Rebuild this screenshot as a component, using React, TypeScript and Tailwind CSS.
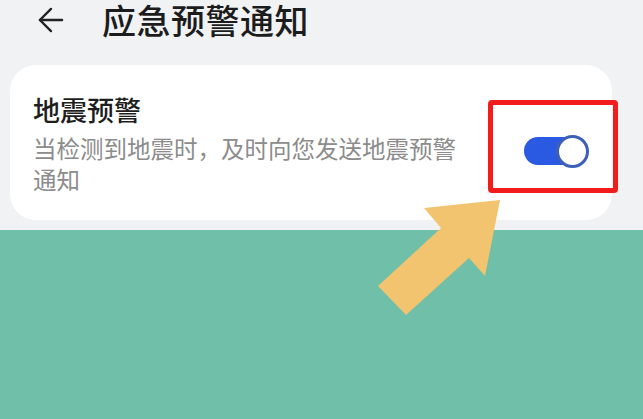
import { ArrowLeft } from 'lucide-react';

function Toggle() {
  return (
    <div className="relative w-[64px] h-[28px] rounded-full bg-[#2a5ae2] flex items-center justify-end">
      <div className="w-[33px] h-[33px] rounded-full bg-white border-[3px] border-[#3d5fb8] -mr-[1px]" />
    </div>
  );
}

export default function App() {
  return (
    <div
      className="relative w-[643px] h-[419px] overflow-hidden flex flex-col"
      style={{ fontFamily: '"Noto Sans CJK SC", "Noto Sans", sans-serif' }}
    >
      <div className="bg-[#f1f2f4] h-[230px] flex flex-col px-[10px]">
        <div className="flex items-center h-[40px] pl-[22px] gap-[32px]">
          <ArrowLeft className="w-[38px] h-[38px] text-[#222]" strokeWidth={1.5} />
          <h1 className="text-[34px] leading-[40px] font-medium text-[#1c1c1c] tracking-[0.5px]">
            应急预警通知
          </h1>
        </div>

        <div className="mt-[25px] bg-white rounded-[26px] w-[602px] h-[155px] flex items-start pl-[23px] pr-[24px] pt-[28px]">
          <div className="flex-1">
            <div className="text-[27px] leading-[34px] font-medium text-[#1e1e1e]">地震预警</div>
            <div className="mt-[6px] text-[23.5px] leading-[31px] text-[#8c8c8c] w-[440px]">
              当检测到地震时，及时向您发送地震预警通知
            </div>
          </div>
          <div className="mt-[44px]">
            <Toggle />
          </div>
        </div>
      </div>
      <div className="flex-1 bg-[#70bfa8]" />

      <div className="absolute left-[488px] top-[100px] w-[130px] h-[93px] border-[5px] border-[#f21c1c] rounded-[4px]" />

      <svg className="absolute left-0 top-0" width="643" height="419" viewBox="0 0 643 419">
        <polygon
          points="500,200 424,208 441,228 378,286 406,315 469,258 485,276"
          fill="#f2c46f"
        />
      </svg>
    </div>
  );
}
